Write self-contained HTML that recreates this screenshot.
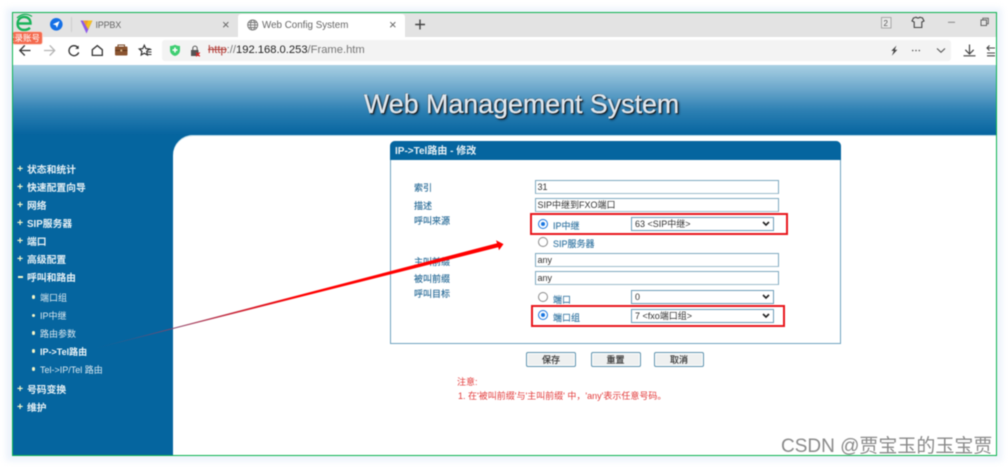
<!DOCTYPE html>
<html lang="zh"><head><meta charset="utf-8"><title>Web Config System</title>
<style>
html,body{margin:0;padding:0;background:#fff}
body{width:1008px;height:467px;position:relative;overflow:hidden;font-family:"Liberation Sans","Noto Sans CJK SC",sans-serif}
.a{position:absolute;white-space:nowrap}
#wrap{position:absolute;left:0;top:0;width:1008px;height:467px;filter:blur(.45px)}
.m{font-size:9.800px;font-weight:bold;color:#e6f0f5;line-height:12px;left:27px}
.s{font-size:9px;color:#dce9f0;line-height:12px;left:40px}
.s.b{font-weight:bold;color:#eef5f8}
.d{width:3.500px;height:3.500px;background:#f4f6c8;border-radius:50%}
.p{font-size:10.500px;font-weight:bold;color:#f4f6c8;line-height:12px;left:17px}
.l{font-size:9px;color:#2e6f9a;left:414px;line-height:12px;-webkit-text-stroke:.15px #2e6f9a}
.i{box-sizing:border-box;left:535px;width:244px;height:14px;border:1px solid #7fa9bf;border-bottom-color:#9dbccc;font-size:9px;color:#333;line-height:13.500px;padding-left:1.500px;background:#fff}
.sel{box-sizing:border-box;left:631px;width:143px;height:13.500px;border:1px solid #6e9db8;font-size:9px;color:#333;line-height:12px;padding-left:3px;background:#fff}
.sel svg{position:absolute;right:3px;top:3px}
.rb{box-sizing:border-box;border:2px solid #e8171c}
.r{box-sizing:border-box;width:10px;height:10px;border-radius:50%;border:1px solid #8a8a8a;background:#fff}
.r.on{border:1.500px solid #1a76e0}
.r.on:after{content:"";position:absolute;left:1.500px;top:1.500px;width:4px;height:4px;border-radius:50%;background:#1a76e0}
.t{font-size:9px;color:#3a7aa5;line-height:12px;-webkit-text-stroke:.15px #3a7aa5}
.btn{box-sizing:border-box;top:352px;height:15px;border:1.500px solid #5f93ae;border-radius:2px;background:#eef0f0;font-size:9px;color:#333;text-align:center;line-height:14.500px;box-shadow:inset 0 0 0 1px #fff;-webkit-text-stroke:.15px #333}
.x{font-size:13px;color:#666;line-height:14px}
</style></head><body><div id="wrap">

<div class="a" style="left:6px;top:8px;width:996px;height:453px;background:#edf3fb;filter:blur(3px)"></div>
<div class="a" style="left:13px;top:13px;width:983px;height:442px;background:#fff"></div>

<!-- tab bar -->
<div class="a" style="left:13px;top:13px;width:983px;height:24px;background:#e3e3e3"></div>
<div class="a" style="left:238px;top:14px;width:167px;height:23px;background:#fff;border-radius:3px 3px 0 0"></div>
<div class="a" style="left:71px;top:17px;width:1px;height:15px;background:#cfcfcf"></div>

<svg class="a" style="left:0;top:0" width="1008" height="66" viewBox="0 0 1008 66">
 <!-- logo e -->
 <path d="M18 23.500h12.500c0-4.200-2.600-6.600-6.200-6.600-3.900 0-6.700 2.900-6.700 6.800 0 4 2.800 6.300 6.600 6.300 2.400 0 4.200-.8 5.800-2.200" fill="none" stroke="#19b35a" stroke-width="2.400"/>
 <path d="M17 18c4-4 10-5 15-1.500" fill="none" stroke="#19b35a" stroke-width="1.300"/>
 <!-- blue circle -->
 <circle cx="56.300" cy="24.300" r="6.300" fill="#1570e6"/>
 <path d="M52.800 24.300l6.800-3.200-2.700 6.800-1-2.700z" fill="#fff"/>
 <!-- V logo -->
 <path d="M80.500 20.500h12l-6 13z" fill="#8f5be8"/>
 <path d="M83 20.500h9.500l-4.300 9z" fill="#f4c21f"/>
 <path d="M86 26l2.200-5.500h-4z" fill="#f29a2e"/>
 <!-- globe -->
 <g fill="none" stroke="#777" stroke-width=".9">
  <circle cx="252.700" cy="25" r="5"/><ellipse cx="252.700" cy="25" rx="2.200" ry="5"/><path d="M247.700 25h10M248.500 22.500h8.400M248.500 27.500h8.400"/>
 </g>
 <!-- plus -->
 <path d="M420 19.500v10M415.200 24.500h9.800" stroke="#444" stroke-width="1.400"/>
 <!-- nav -->
 <g fill="none" stroke="#333" stroke-width="1.300">
  <path d="M30.500 50.500H20M24.800 45.300L19.800 50.500l5 5"/>
  <path d="M44 50.500h10.500M49.700 45.300l5 5.200-5 5" stroke="#b5b5b5"/>
  <path d="M77.800 47.400a5 5 0 1 0 .9 5" />
  <path d="M92.300 55.400v-5.700l5-4.100 5 4.100v5.700z"/>
 </g>
 <path d="M78.700 45.500v3.400h-3.400z" fill="#333"/>
 <!-- briefcase -->
 <path d="M118 46.500v-1.500h6.500v1.500" fill="none" stroke="#7a4a28" stroke-width="1"/>
 <rect x="115" y="46.500" width="12.500" height="9" rx="1" fill="#8a5430"/>
 <rect x="115" y="50" width="12.500" height="1" fill="#5f3519"/><rect x="120.400" y="49.500" width="1.800" height="2" fill="#e0c090"/>
 <!-- star list -->
 <path d="M144.300 45.300l1.500 3.300 3.500.4-2.600 2.400.7 3.600-3.100-1.800-3.100 1.800.7-3.600-2.600-2.400 3.500-.4z" fill="none" stroke="#333" stroke-width="1.200"/>
 <path d="M148 49.500h3.500M147.800 52h3.700M147.800 54.500h3.700" stroke="#333" stroke-width="1"/>
 <!-- address bar -->
 <rect x="162" y="40" width="789" height="21" rx="3" fill="#f3f3f3"/>
 <!-- shield -->
 <path d="M170 46c2 0 3.600-.5 5-1.200 1.400.7 3 1.200 5 1.200v4c0 3.300-2.200 5.200-5 6-2.800-.8-5-2.700-5-6z" fill="#3fce72"/>
 <path d="M175 47.500v5M172.500 50h5" stroke="#fff" stroke-width="1.500"/>
 <!-- lock -->
 <path d="M192.800 50v-1.700a2.200 2.200 0 0 1 4.400 0V50" fill="none" stroke="#555" stroke-width="1"/>
 <rect x="191" y="50" width="7.500" height="6" fill="#555"/>
 <path d="M196 52.500l3.800 3.800M199.800 52.500l-3.800 3.800" stroke="#e02020" stroke-width="1.200"/>
 <!-- right icons -->
 <path d="M896.500 45.500l-5.200 5.400h2.500l-2 4.800 5.600-6h-2.600z" fill="#444"/>
 <g fill="#555"><circle cx="912.700" cy="50.500" r=".8"/><circle cx="916" cy="50.500" r=".8"/><circle cx="919.300" cy="50.500" r=".8"/></g>
 <path d="M937 48.500l4 3.800 4-3.800" fill="none" stroke="#555" stroke-width="1.100"/>
 <path d="M969.500 44.500v9M965.300 49.800l4.200 4.200 4.200-4.200M963.500 55.800h12" fill="none" stroke="#444" stroke-width="1.200"/>
 <path d="M995 48h-8M989.500 45.500L987 48l2.500 2.500M987 53h8M987 55.800h8" fill="none" stroke="#444" stroke-width="1.100"/>
 <!-- window icons -->
 <rect x="881.500" y="17.500" width="9.500" height="10.500" fill="#e9e9e9" stroke="#999" stroke-width=".8"/>
 <path d="M913.500 18l2.500-.8c1.200 1 2.800 1 4 0l2.500.8 1.500 3-2.200 1v5.500h-7.600V22l-2.200-1z" fill="none" stroke="#444" stroke-width="1.100"/>
 <path d="M948 22.300h7" stroke="#888" stroke-width="1"/>
 <rect x="981" y="20" width="5.500" height="5.500" fill="none" stroke="#666" stroke-width="1"/>
 <path d="M982.800 20v-1.800h5.500v5.500h-1.800" fill="none" stroke="#666" stroke-width="1"/>
</svg>

<div class="a" style="left:13px;top:32px;width:29px;height:12px;background:#f46a4e;border-radius:2px;overflow:hidden;color:#fff;font-size:8.500px;line-height:12px;text-indent:-7px;box-shadow:0 0 0 .8px #fbd2c6">登录账号</div>
<div class="a" style="left:95.500px;top:19px;font-size:9px;letter-spacing:-.2px;color:#666;line-height:13px">IPPBX</div>
<div class="a" style="left:262px;top:19px;font-size:9.800px;color:#666;line-height:13px">Web Config System</div>
<div class="a x" style="left:222px;top:18px">×</div>
<div class="a x" style="left:389px;top:18px">×</div>
<div class="a" style="left:883.500px;top:17.500px;font-size:8px;color:#555;line-height:11px">2</div>
<div class="a" style="left:208px;top:43px;font-size:11.200px;line-height:14px;color:#777"><span style="color:#b03a34;text-decoration:line-through">http</span>://<span style="color:#222">192.168.0.253</span>/Frame.htm</div>

<!-- header -->
<div class="a" style="left:13px;top:65px;width:983px;height:70px;background:linear-gradient(#a9d0e3,#6aa6cb 35%,#2d80b3 65%,#05649f)"></div>
<div class="a" style="left:364px;top:88px;font-size:26.800px;line-height:32px;color:#dfe7ee;-webkit-text-stroke:.3px #dfe7ee;text-shadow:1px 1px 0 #1a1a1a,1.500px 1.500px 2px #0a2a45,-.5px -.5px 0 #3a4a58">Web Management System</div>

<!-- sidebar + content -->
<div class="a" style="left:13px;top:135px;width:160px;height:320px;background:#05659f"></div>
<div class="a" style="left:173px;top:135px;width:20px;height:20px;background:#05659f"></div>
<div class="a" style="left:173px;top:135px;width:823px;height:320px;background:#fff;border-radius:20px 0 0 0;box-shadow:inset 0 1px 0 #bcdbe8"></div>

<div class="a p" style="top:163px">+</div><div class="a m" style="top:165px">状态和统计</div>
<div class="a p" style="top:181px">+</div><div class="a m" style="top:183px">快速配置向导</div>
<div class="a p" style="top:199px">+</div><div class="a m" style="top:201px">网络</div>
<div class="a p" style="top:217px">+</div><div class="a m" style="top:219px">SIP服务器</div>
<div class="a p" style="top:235px">+</div><div class="a m" style="top:237px">端口</div>
<div class="a p" style="top:253px">+</div><div class="a m" style="top:255px">高级配置</div>
<div class="a" style="left:18px;top:276px;width:5px;height:1.500px;background:#f4f6c8"></div><div class="a m" style="top:273px">呼叫和路由</div>
<div class="a d" style="left:31.500px;top:295px"></div><div class="a s" style="top:292px">端口组</div>
<div class="a d" style="left:31.500px;top:313.500px"></div><div class="a s" style="top:310px">IP中继</div>
<div class="a d" style="left:31.500px;top:331px"></div><div class="a s" style="top:328px">路由参数</div>
<div class="a d" style="left:31.500px;top:349px"></div><div class="a s b" style="top:346px">IP-&gt;Tel路由</div>
<div class="a d" style="left:31.500px;top:367px"></div><div class="a s" style="top:364px">Tel-&gt;IP/Tel 路由</div>
<div class="a p" style="top:383px">+</div><div class="a m" style="top:385px">号码变换</div>
<div class="a p" style="top:401px">+</div><div class="a m" style="top:403px">维护</div>

<!-- panel -->
<div class="a" style="box-sizing:border-box;left:390px;top:141px;width:451px;height:203px;border:1px solid #6fa3bf;border-radius:5px 5px 0 0;background:#fff"></div>
<div class="a" style="left:390px;top:141px;width:451px;height:18.500px;background:#05659f;border-radius:5px 5px 0 0"></div>
<div class="a" style="left:395px;top:146px;font-size:10px;font-weight:bold;color:#e6f0f5;line-height:12px">IP-&gt;Tel路由 - 修改</div>

<div class="a l" style="top:181.500px">索引</div>
<div class="a l" style="top:200px">描述</div>
<div class="a l" style="top:214.500px">呼叫来源</div>
<div class="a l" style="top:255.500px">主叫前缀</div>
<div class="a l" style="top:273px">被叫前缀</div>
<div class="a l" style="top:287.500px">呼叫目标</div>

<div class="a i" style="top:180px">31</div>
<div class="a i" style="top:198px">SIP中继到FXO端口</div>
<div class="a i" style="top:253px">any</div>
<div class="a i" style="top:271px">any</div>

<div class="a rb" style="left:530px;top:213px;width:258px;height:22px"></div>
<div class="a rb" style="left:531px;top:305px;width:254px;height:22px"></div>

<div class="a r on" style="left:538px;top:219px"></div><div class="a t" style="left:553px;top:220px">IP中继</div>
<div class="a r" style="left:538px;top:237px"></div><div class="a t" style="left:553px;top:238px">SIP服务器</div>
<div class="a r" style="left:538px;top:292px"></div><div class="a t" style="left:553px;top:293.500px">端口</div>
<div class="a r on" style="left:538px;top:310px"></div><div class="a t" style="left:553px;top:312px">端口组</div>

<div class="a sel" style="top:217px">63 &lt;SIP中继&gt;<svg width="8" height="6" viewBox="0 0 8 6"><path d="M1 1l3 3 3-3" fill="none" stroke="#222" stroke-width="1.600"/></svg></div>
<div class="a sel" style="top:290px">0<svg width="8" height="6" viewBox="0 0 8 6"><path d="M1 1l3 3 3-3" fill="none" stroke="#222" stroke-width="1.600"/></svg></div>
<div class="a sel" style="top:309px">7 &lt;fxo端口组&gt;<svg width="8" height="6" viewBox="0 0 8 6"><path d="M1 1l3 3 3-3" fill="none" stroke="#222" stroke-width="1.600"/></svg></div>

<div class="a btn" style="left:526px;width:50px">保存</div>
<div class="a btn" style="left:590.500px;width:50px">重置</div>
<div class="a btn" style="left:654px;width:50px">取消</div>

<div class="a" style="left:457px;top:376px;font-size:9px;color:#e23b3b;line-height:12px">注意:</div>
<div class="a" style="left:458px;top:390px;font-size:9px;color:#e23b3b;line-height:12px">1. 在'被叫前缀'与'主叫前缀' 中，'any'表示任意号码。</div>

<!-- arrow -->
<svg class="a" style="left:0;top:0" width="1008" height="467" viewBox="0 0 1008 467">
 <defs><linearGradient id="g" x1="95" y1="348" x2="300" y2="296" gradientUnits="userSpaceOnUse"><stop offset="0" stop-color="#05659f"/><stop offset=".45" stop-color="#a04060"/><stop offset="1" stop-color="#f00"/></linearGradient></defs>
 <path d="M95 348.300L497 243.300l-1-3 7.500 3.800-4.500 6.200-.8-3L95 348.500z" fill="url(#g)"/>
</svg>

<!-- green frame -->
<div class="a" style="box-sizing:border-box;left:11.500px;top:12px;width:985px;height:444px;border:1.500px solid #0bb350"></div>

<!-- watermark -->
<div class="a" style="left:781px;top:437px;font-size:19px;line-height:20px;color:#8a8a8a;font-family:'Liberation Sans','Noto Sans CJK SC',sans-serif">CSDN @贾宝玉的玉宝贾</div>

</div></body></html>
